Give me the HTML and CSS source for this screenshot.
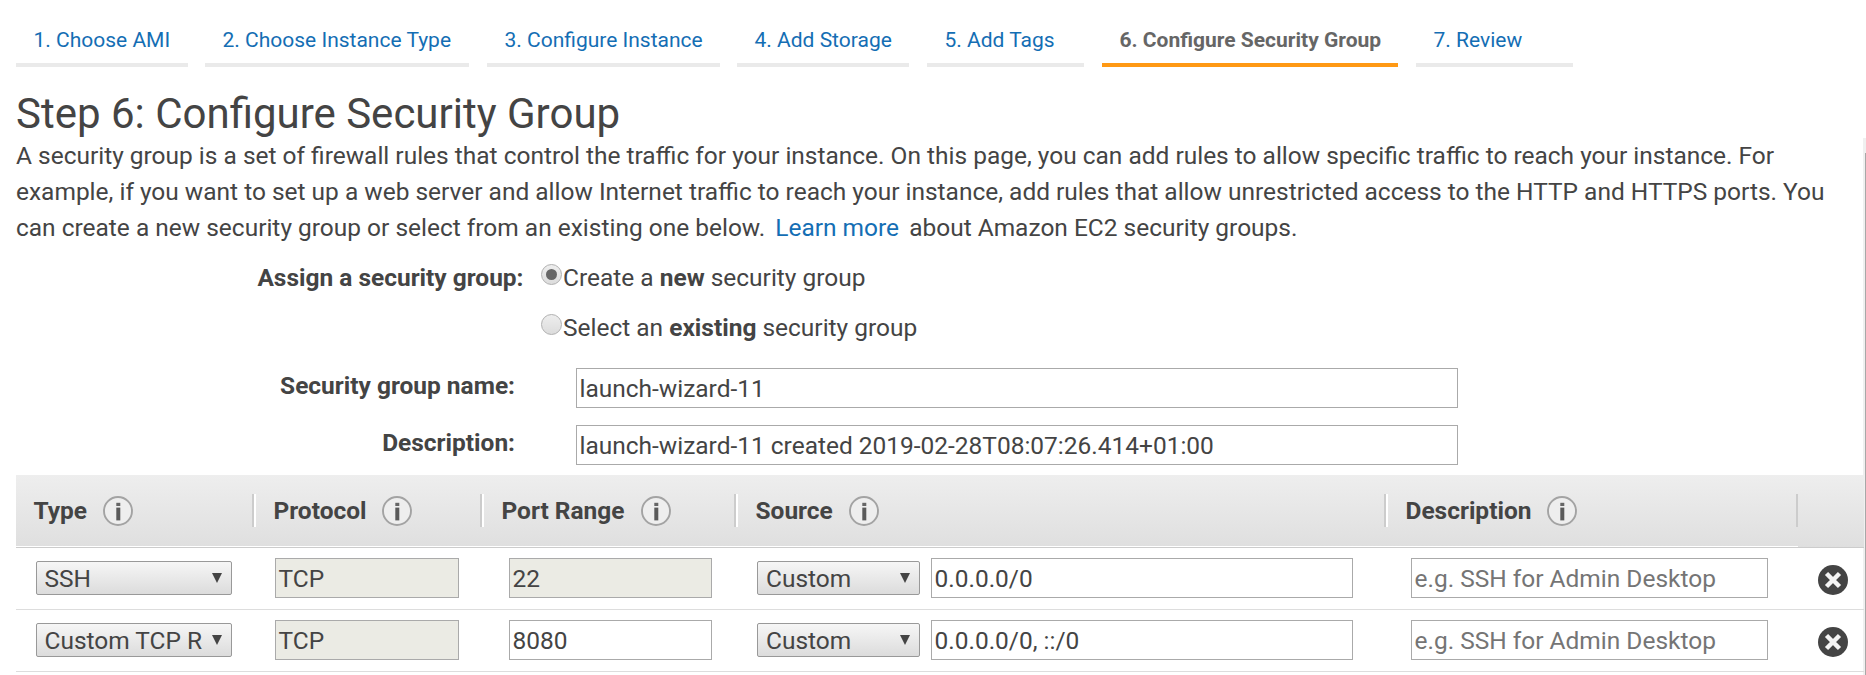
FILE: index.html
```html
<!DOCTYPE html>
<html lang="en">
<head>
<meta charset="utf-8">
<title>Configure Security Group</title>
<link rel="stylesheet" href="styles.css">
</head>
<body>
<svg class="defs" width="0" height="0">
  <symbol id="info" viewBox="0 0 30 30">
    <circle cx="15" cy="15" r="14" fill="#eee" stroke="#a3a3a3" stroke-width="1.9"/>
    <rect x="13.300" y="6.800" width="4" height="3.200" fill="#666"/>
    <rect x="13.300" y="11.600" width="4" height="12.800" fill="#5a5a5a"/>
  </symbol>
  <symbol id="remove" viewBox="0 0 30 30">
    <circle cx="15" cy="15" r="15" fill="#444"/>
    <path d="M8.500 8.500l13 13M21.500 8.500l-13 13" stroke="#f4f4f4" stroke-width="4.500"/>
  </symbol>
</svg>
<nav class="steps">
  <a class="step step-ami">1. Choose AMI</a>
  <a class="step step-type">2. Choose Instance Type</a>
  <a class="step step-instance">3. Configure Instance</a>
  <a class="step step-storage">4. Add Storage</a>
  <a class="step step-tags">5. Add Tags</a>
  <a class="step step-group active">6. Configure Security Group</a>
  <a class="step step-review">7. Review</a>
</nav>
<h1 class="title">Step 6: Configure Security Group</h1>
<main class="content">
  <p class="intro">A security group is a set of firewall rules that control the traffic for your instance. On this page, you can add rules to allow specific traffic to reach your instance. For<br>example, if you want to set up a web server and allow Internet traffic to reach your instance, add rules that allow unrestricted access to the HTTP and HTTPS ports. You<br>can create a new security group or select from an existing one below. <a class="link">Learn more</a> about Amazon EC2 security groups.</p>
  <div class="assign">
    <div class="assign-label">Assign a security group:</div>
    <div class="choices">
      <label class="choice"><span class="radio checked"></span><span>Create a <b>new</b> security group</span></label>
      <label class="choice"><span class="radio"></span><span>Select an <b>existing</b> security group</span></label>
    </div>
  </div>
  <div class="field"><div class="field-label">Security group name:</div><div class="input wide">launch-wizard-11</div></div>
  <div class="field"><div class="field-label">Description:</div><div class="input wide">launch-wizard-11 created 2019-02-28T08:07:26.414+01:00</div></div>
  <section class="rules">
    <div class="row head">
      <div class="th">Type<svg class="info"><use href="#info"/></svg></div>
      <div class="th">Protocol<svg class="info"><use href="#info"/></svg></div>
      <div class="th">Port Range<svg class="info"><use href="#info"/></svg></div>
      <div class="th">Source<svg class="info"><use href="#info"/></svg></div>
      <div class="th last">Description<svg class="info"><use href="#info"/></svg></div>
      <div class="th-end"></div>
    </div>
    <div class="row rule">
      <div class="td type"><div class="select"><span>SSH</span><i class="arrow"></i></div></div>
      <div class="td protocol"><div class="input disabled">TCP</div></div>
      <div class="td port"><div class="input disabled">22</div></div>
      <div class="td source"><div class="select custom"><span>Custom</span><i class="arrow"></i></div><div class="input">0.0.0.0/0</div></div>
      <div class="td desc"><div class="input hint">e.g. SSH for Admin Desktop</div></div>
      <div class="td end"><svg class="remove"><use href="#remove"/></svg></div>
    </div>
    <div class="row rule">
      <div class="td type"><div class="select"><span>Custom TCP R</span><i class="arrow"></i></div></div>
      <div class="td protocol"><div class="input disabled">TCP</div></div>
      <div class="td port"><div class="input">8080</div></div>
      <div class="td source"><div class="select custom"><span>Custom</span><i class="arrow"></i></div><div class="input">0.0.0.0/0, ::/0</div></div>
      <div class="td desc"><div class="input hint">e.g. SSH for Admin Desktop</div></div>
      <div class="td end"><svg class="remove"><use href="#remove"/></svg></div>
    </div>
  </section>
</main>
</body>
</html>
```
FILE: styles.css
```css
* { box-sizing: border-box; }
body { margin: 0; height: 675px; overflow: hidden; background: #fff; color: #444; font: 24.48px/36px Roboto, sans-serif; }
.defs { display: block; }
.steps { display: flex; padding: 20px 0 0 16px; height: 67px; font-size: 21px; line-height: 40px; }
.step { height: 47px; padding-left: 17.5px; border-bottom: 4px solid #eaeaea; color: #146eb4; white-space: nowrap; }
.step-ami { width: 172px; margin-right: 17px; }
.step-type { width: 264px; margin-right: 18px; }
.step-instance { width: 233px; margin-right: 17px; }
.step-storage { width: 172px; margin-right: 18px; }
.step-tags { width: 157px; margin-right: 18px; }
.step-group { width: 296px; margin-right: 18px; }
.step-review { width: 157px; }
.step.active { color: #666; font-weight: 700; border-color: #ff9914; }
.title { margin: 0; padding: 22px 0 0 16px; height: 71px; font-size: 42px; line-height: 50px; font-weight: 400; }
.content { height: 537px; padding-left: 16px; background: linear-gradient(#a8a8a8, #a8a8a8) right 0 top 15px / 1px 522px no-repeat, linear-gradient(#f0f0f0, #f0f0f0) right 0 top 0 / 3px 100% no-repeat; }
.intro { margin: 0; height: 122px; line-height: 36px; white-space: nowrap; }
.link { color: #146eb4; margin: 0 4px; }
.assign { display: flex; height: 108px; }
.assign-label { width: 507.5px; text-align: right; font-weight: 700; }
.choices { margin-left: 17.5px; }
.choice { display: flex; height: 50px; }
.radio { display: flex; width: 21px; height: 21px; margin: 4px 1px 0 0; border: 1px solid #b0b0b0; border-radius: 50%; background: linear-gradient(#eee, #dcdcdc); align-items: center; justify-content: center; }
.radio.checked::after { content: ""; width: 11px; height: 11px; border-radius: 50%; background: #666; }
.field { display: flex; height: 57px; }
.field-label { width: 499px; margin-right: 61px; text-align: right; font-weight: 700; }
.input { height: 40px; flex: 1; padding: 1px 2.5px 0; border: 1px solid #aaa; background: #fff; line-height: 38px; white-space: nowrap; }
.input.wide { flex: none; width: 882px; }
.input.disabled { background: #ebebe4; }
.input.hint { color: #757575; }
.rules { width: 1848px; margin-top: -7px; }
.row { display: grid; grid-template-columns: 240px 228px 254px 650px 410px 66px; }
.head { height: 73px; border-bottom: 1px solid #ccc; background: linear-gradient(#eee, #dfdfdf); font-weight: 700; }
.th { display: flex; align-items: center; padding: 1px 0 0 17.5px; border-bottom: 1px solid #fff; background: linear-gradient(#ccc, #ccc) right 2px top 19px / 2px 33px no-repeat, linear-gradient(#fff, #fff) right 0 top 19px / 2px 33px no-repeat; }
.th.last { background: linear-gradient(#ccc, #ccc) right 0 top 19px / 2px 33px no-repeat; }
.info { width: 30px; height: 30px; margin: 0 0 1px 16px; }
.rule { height: 62px; border-bottom: 1px solid #ddd; }
.td { display: flex; padding-top: 10px; }
.type { padding-left: 20px; padding-right: 24px; }
.protocol { padding-left: 19px; padding-right: 25px; }
.port { padding-left: 25px; padding-right: 26px; }
.source { padding-left: 19px; padding-right: 35px; gap: 11px; }
.desc { padding-left: 23px; padding-right: 30px; }
.end { padding: 17px 0 0 20px; }
.remove { width: 30px; height: 30px; }
.select { display: flex; align-items: center; justify-content: space-between; width: 196px; height: 34px; margin-top: 3px; padding: 1px 9px 0 7.5px; border: 1px solid #999; border-radius: 2px; background: linear-gradient(#f6f6f6, #dcdcdc); white-space: nowrap; }
.select.custom { width: 163px; padding-left: 8px; }
.arrow { border: 5px solid transparent; border-top: 10px solid #444; border-bottom: 0; margin-top: -2px; }
```
